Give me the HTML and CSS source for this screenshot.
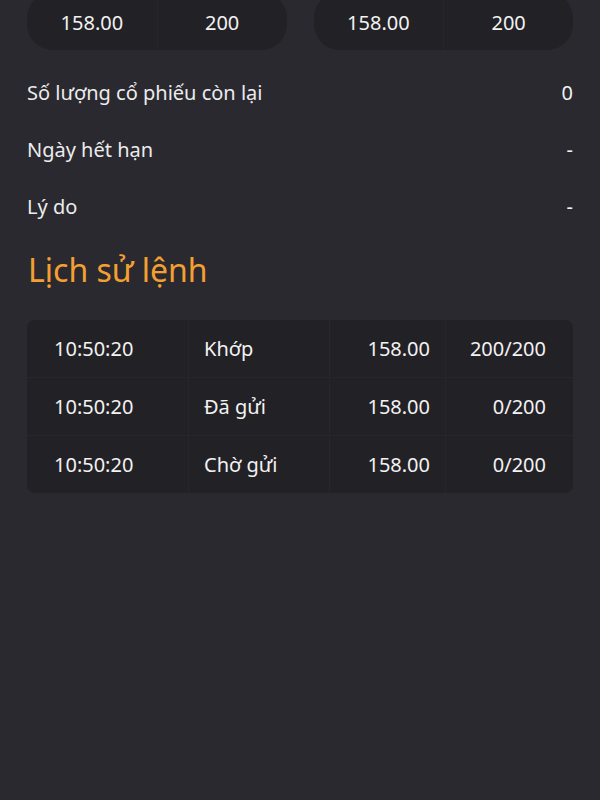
FILE: index.html
```html
<!DOCTYPE html>
<html lang="vi">
<head>
    <meta charset="UTF-8">
    <meta name="viewport" content="width=device-width, initial-scale=1.0">
    <title>Chi tiết lệnh</title>
    <link rel="stylesheet" href="styles.css">
</head>
<body>
    <div class="page">
        <!-- price / volume pills -->
        <div class="pills">
            <div class="pill">
                <div class="pill-cell">158.00</div>
                <div class="pill-cell">200</div>
            </div>
            <div class="pill">
                <div class="pill-cell">158.00</div>
                <div class="pill-cell">200</div>
            </div>
        </div>

        <div class="info">
            <div class="info-row">
                <span class="info-label">Số lượng cổ phiếu còn lại</span>
                <span class="info-value">0</span>
            </div>
            <div class="info-row">
                <span class="info-label">Ngày hết hạn</span>
                <span class="info-value">-</span>
            </div>
            <div class="info-row">
                <span class="info-label">Lý do</span>
                <span class="info-value">-</span>
            </div>
        </div>

        <h2 class="section-title">Lịch sử lệnh</h2>

        <div class="history">
            <div class="history-row">
                <div class="cell time">10:50:20</div>
                <div class="cell status">Khớp</div>
                <div class="cell price">158.00</div>
                <div class="cell qty">200/200</div>
            </div>
            <div class="history-row">
                <div class="cell time">10:50:20</div>
                <div class="cell status">Đã gửi</div>
                <div class="cell price">158.00</div>
                <div class="cell qty">0/200</div>
            </div>
            <div class="history-row">
                <div class="cell time">10:50:20</div>
                <div class="cell status">Chờ gửi</div>
                <div class="cell price">158.00</div>
                <div class="cell qty">0/200</div>
            </div>
        </div>
    </div>
</body>
</html>
```

FILE: styles.css
```css
html, body {
    margin: 0;
    padding: 0;
    background-color: #2a2930;
}

body {
    font-family: "Noto Sans", sans-serif;
    color: #f2f2f2;
    font-size: 20px;
    min-height: 800px;
}

.page {
    padding: 0 27px;
}

/* Top pills */
.pills {
    display: grid;
    grid-template-columns: 1fr 1fr;
    gap: 27px;
    margin-top: -8px;
}

.pill {
    display: grid;
    grid-template-columns: 1fr 1fr;
    background-color: #222126;
    border-radius: 26px;
    height: 58px;
    overflow: hidden;
}

.pill-cell {
    display: flex;
    align-items: center;
    justify-content: center;
    padding-top: 3px;
}

.pill-cell + .pill-cell {
    border-left: 1px solid #27262b;
}

/* Info rows */
.info {
    margin-top: 14px;
}

.info-row {
    display: flex;
    justify-content: space-between;
    align-items: center;
    height: 57px;
}

.info-label {
    color: #ececec;
}

/* Section heading */
.section-title {
    margin: 7px 0 0 1px;
    font-weight: 400;
    font-size: 32px;
    line-height: 56px;
    color: #f4a030;
}

/* Order history */
.history {
    margin-top: 22px;
    background-color: #222126;
    border-radius: 8px;
    overflow: hidden;
}

.history-row {
    display: grid;
    grid-template-columns: 161px 141px 116px 1fr;
    height: 57px;
}

.history-row + .history-row {
    border-top: 1px solid #27262b;
}

.cell {
    display: flex;
    align-items: center;
}

.cell + .cell {
    border-left: 1px solid #27262b;
}

.time {
    padding-left: 27px;
}

.status {
    padding-left: 15px;
}

.price {
    justify-content: flex-end;
    padding-right: 15px;
}

.qty {
    justify-content: flex-end;
    padding-right: 27px;
}
```
